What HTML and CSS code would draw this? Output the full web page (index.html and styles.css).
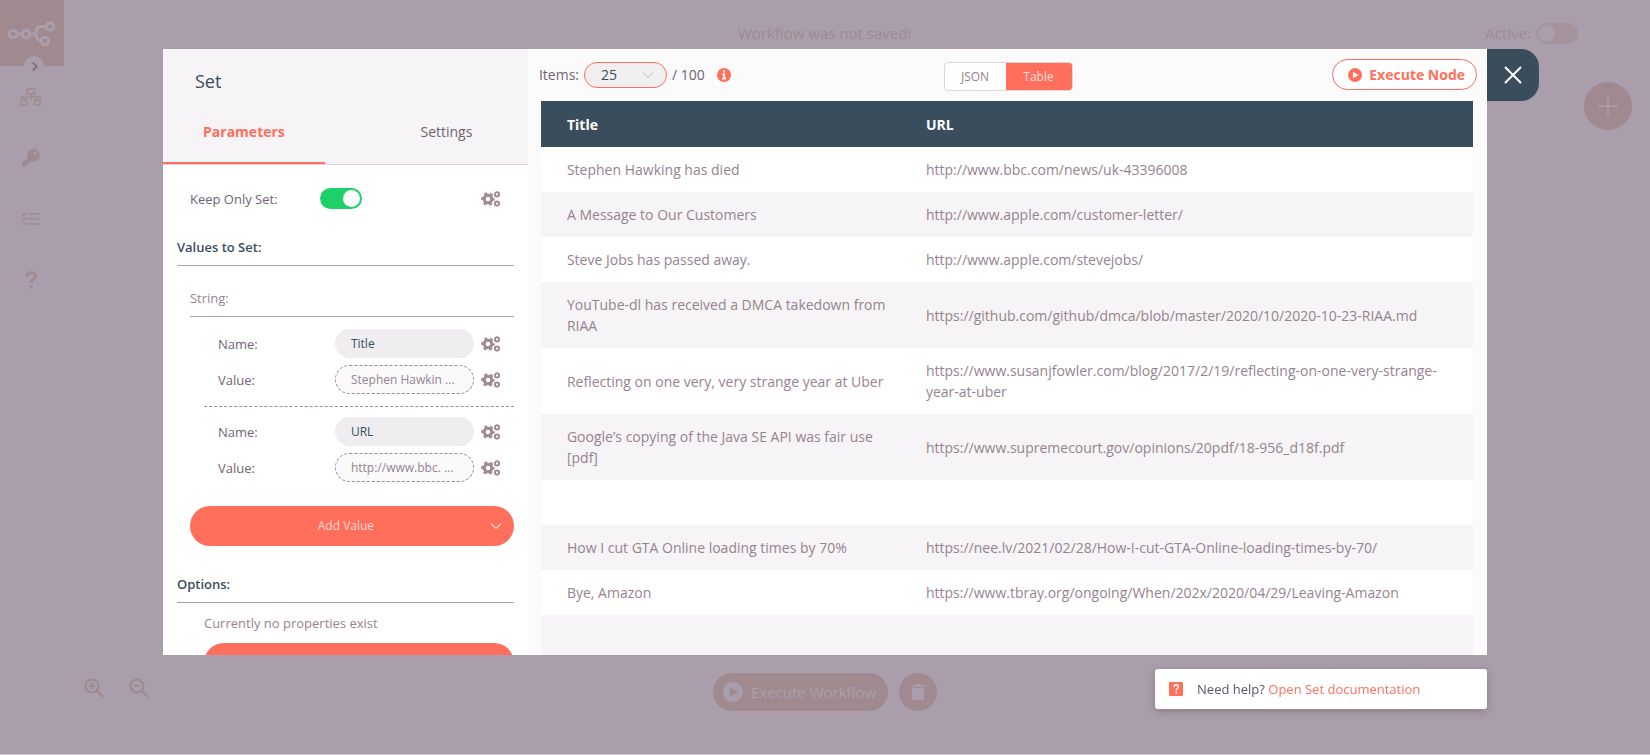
FILE: index.html
```html
<!DOCTYPE html>
<html lang="en">
<head>
<meta charset="utf-8">
<title>Set</title>
<link rel="stylesheet" href="styles.css">
</head>
<body>
<svg class="defs" aria-hidden="true">
  <symbol id="cogs" viewBox="0 0 20 16">
    <g fill="none" stroke="currentColor">
      <circle cx="7" cy="8" r="3.8" stroke-width="3"/>
      <circle cx="7" cy="8" r="5.8" stroke-width="2" stroke-dasharray="3 3.07" stroke-dashoffset="1.5"/>
      <circle cx="16" cy="3.4" r="2.1" stroke-width="1.9"/>
      <circle cx="16" cy="12.6" r="2.1" stroke-width="1.9"/>
    </g>
  </symbol>
  <symbol id="play" viewBox="0 0 20 20">
    <path fill="currentColor" fill-rule="evenodd" d="M10 0a10 10 0 1 0 0 20a10 10 0 1 0 0-20zM7 5.2L15.3 10L7 14.8z"/>
  </symbol>
</svg>

<div class="app">
  <aside class="sidebar">
    <div class="logo">
      <svg viewBox="0 0 50 26" width="50" height="26" fill="none" stroke="currentColor" stroke-width="3">
        <circle cx="6" cy="14" r="3.8"/><circle cx="19" cy="14" r="3.8"/><circle cx="43" cy="6.500" r="3.800"/><circle cx="38" cy="21" r="3.800"/>
        <path d="M10 14h5M23 14h4c4 0 1-7.500 6-7.500h6M27 14c4 0 1 7 7 7"/>
      </svg>
      <button class="expand" aria-label="Expand menu">
        <svg viewBox="0 0 10 12" width="9" height="11"><path d="M3 1.500L7.500 6L3 10.500" fill="none" stroke="currentColor" stroke-width="2"/></svg>
      </button>
    </div>
    <nav class="menu">
      <a href="#" aria-label="Workflows"><svg viewBox="0 0 22 18" width="22" height="18" fill="none" stroke="currentColor" stroke-width="1.600"><rect x="7.500" y="1" width="7" height="5"/><rect x="1" y="12" width="5.500" height="5"/><rect x="14.500" y="12" width="5.500" height="5"/><path d="M11 6v6M0 9h22M3.500 9v3M17.500 9v3"/></svg></a>
      <a href="#" aria-label="Credentials"><svg viewBox="0 0 18 18" width="18" height="18"><path fill="currentColor" fill-rule="evenodd" d="M11.500 0a6.200 6.200 0 1 1-2 12.100L8 13.500H6v2H4V18H0v-4l5.700-5.600A6.200 6.200 0 0 1 11.500 0zM13 3a1.600 1.600 0 1 0 0 3.200A1.600 1.600 0 0 0 13 3z"/></svg></a>
      <a href="#" aria-label="Executions"><svg viewBox="0 0 18 14" width="18" height="14" fill="none" stroke="currentColor" stroke-width="1.600"><path d="M6 2h12M6 7h12M6 12h12M0 2l1.500 1.500L4.500 0M0 7l1.500 1.500L4.500 5M1 12h3"/></svg></a>
      <a href="#" aria-label="Help"><svg viewBox="0 0 12 18" width="12" height="18" fill="none" stroke="currentColor" stroke-width="3"><path d="M1.500 5.500C2 0.500 10.300 0.500 10.300 5.200c0 3.300-4.300 3-4.300 6.800M6 14.200v3.400"/></svg></a>
    </nav>
  </aside>
  <header class="topbar">
    <span class="unsaved">Workflow was not saved!</span>
    <label class="active">Active: <input class="switch switch-off" type="checkbox"></label>
  </header>
  <button class="add-node" aria-label="Add node"><svg viewBox="0 0 20 20" width="20" height="20"><path d="M10 0v20M0 10h20" stroke="currentColor" stroke-width="1.500"/></svg></button>
  <div class="zoom">
    <button aria-label="Zoom in"><svg viewBox="0 0 20 20" width="20" height="20" fill="none" stroke="currentColor" stroke-width="2.200"><circle cx="8" cy="8" r="6.500"/><path d="M13 13l6 6M8 5v6M5 8h6"/></svg></button>
    <button aria-label="Zoom out"><svg viewBox="0 0 20 20" width="20" height="20" fill="none" stroke="currentColor" stroke-width="2.200"><circle cx="8" cy="8" r="6.500"/><path d="M13 13l6 6M5 8h6"/></svg></button>
  </div>
  <div class="run">
    <button class="run-workflow"><svg width="20" height="20"><use href="#play"/></svg>Execute Workflow</button>
    <button class="run-clear" aria-label="Delete execution data"><svg viewBox="0 0 14 16" width="14" height="16" fill="currentColor"><path d="M0 1.500h4L5 0h4l1 1.500h4V3H0zM1 4h12v10.500a1.500 1.500 0 0 1-1.500 1.500h-9A1.500 1.500 0 0 1 1 14.500z"/></svg></button>
  </div>
</div>

<div class="overlay">
  <div class="dialog" role="dialog" aria-labelledby="node-title">
    <div class="dialog-body">
      <section class="settings">
        <div class="settings-head">
          <h1 id="node-title">Set</h1>
          <div class="tabs" role="tablist">
            <button class="tab tab-on" role="tab" aria-selected="true">Parameters</button>
            <button class="tab" role="tab" aria-selected="false">Settings</button>
          </div>
        </div>
        <div class="params">
          <div class="row keep-row">
            <label for="keep">Keep Only Set:</label>
            <input id="keep" class="switch" type="checkbox" checked>
            <button class="cog" aria-label="Options"><svg width="20" height="16"><use href="#cogs"/></svg></button>
          </div>
          <h2>Values to Set:</h2>
          <div class="group">
            <h3>String:</h3>
            <div class="pair">
              <div class="row"><label for="n1">Name:</label><input id="n1" class="field" type="text" value="Title"><button class="cog" aria-label="Options"><svg width="20" height="16"><use href="#cogs"/></svg></button></div>
              <div class="row"><label for="v1">Value:</label><input id="v1" class="field field-expr" type="text" value="Stephen Hawkin ..."><button class="cog" aria-label="Options"><svg width="20" height="16"><use href="#cogs"/></svg></button></div>
            </div>
            <div class="pair">
              <div class="row"><label for="n2">Name:</label><input id="n2" class="field" type="text" value="URL"><button class="cog" aria-label="Options"><svg width="20" height="16"><use href="#cogs"/></svg></button></div>
              <div class="row"><label for="v2">Value:</label><input id="v2" class="field field-expr" type="text" value="http://www.bbc. ..."><button class="cog" aria-label="Options"><svg width="20" height="16"><use href="#cogs"/></svg></button></div>
            </div>
            <button class="add"><span>Add Value</span><svg viewBox="0 0 12 8" width="12" height="8"><path d="M1 1.500l5 5l5-5" fill="none" stroke="currentColor" stroke-width="1.200"/></svg></button>
          </div>
          <h2>Options:</h2>
          <p class="empty">Currently no properties exist</p>
          <button class="add add-option" aria-label="Add option"></button>
        </div>
      </section>

      <section class="output">
        <div class="output-bar">
          <div class="items">
            <label for="count">Items:</label>
            <span class="select-box">
              <select id="count"><option>25</option></select>
              <svg viewBox="0 0 12 8" width="12" height="8"><path d="M1 1.500l5 5l5-5" fill="none" stroke="currentColor"/></svg>
            </span>
            <span>/ 100</span>
            <svg class="info" viewBox="0 0 14 14" width="14" height="14"><circle cx="7" cy="7" r="7" fill="currentColor"/><path d="M7 2.300v2.200M5.300 6.300H7.300V10.500M5.200 10.500h3.700" fill="none" stroke="#fff" stroke-width="1.800"/></svg>
          </div>
          <div class="views"><button>JSON</button><button class="view-on">Table</button></div>
          <button class="run-node"><svg width="14" height="14"><use href="#play"/></svg>Execute Node</button>
        </div>
        <table>
          <thead><tr><th class="col-title">Title</th><th>URL</th></tr></thead>
          <tbody>
            <tr><td>Stephen Hawking has died</td><td>http://www.bbc.com/news/uk-43396008</td></tr>
            <tr><td>A Message to Our Customers</td><td>http://www.apple.com/customer-letter/</td></tr>
            <tr><td>Steve Jobs has passed away.</td><td>http://www.apple.com/stevejobs/</td></tr>
            <tr><td>YouTube-dl has received a DMCA takedown from RIAA</td><td>https://github.com/github/dmca/blob/master/2020/10/2020-10-23-RIAA.md</td></tr>
            <tr><td>Reflecting on one very, very strange year at Uber</td><td>https://www.susanjfowler.com/blog/2017/2/19/reflecting-on-one-very-strange-year-at-uber</td></tr>
            <tr><td>Google’s copying of the Java SE API was fair use [pdf]</td><td>https://www.supremecourt.gov/opinions/20pdf/18-956_d18f.pdf</td></tr>
            <tr><td></td><td></td></tr>
            <tr><td>How I cut GTA Online loading times by 70%</td><td>https://nee.lv/2021/02/28/How-I-cut-GTA-Online-loading-times-by-70/</td></tr>
            <tr><td>Bye, Amazon</td><td>https://www.tbray.org/ongoing/When/202x/2020/04/29/Leaving-Amazon</td></tr>
            <tr><td></td><td></td></tr>
          </tbody>
        </table>
      </section>
    </div>
    <button class="close" aria-label="Close"><svg viewBox="0 0 18 18" width="18" height="18"><path d="M1 1l16 16M17 1L1 17" stroke="currentColor" stroke-width="2"/></svg></button>
    <div class="help">
      <svg viewBox="0 0 14 14" width="14" height="14"><rect width="14" height="14" rx="1" fill="currentColor"/><path d="M5 5c0-3 4.500-3 4.500-.4C9.500 6.200 7.300 6.200 7.300 8.400M7.300 9.800v1.800" fill="none" stroke="#fff" stroke-width="1.500"/></svg>
      <span>Need help? <a href="#">Open Set documentation</a></span>
    </div>
  </div>
</div>
</body>
</html>
```

FILE: styles.css
```css
:root {
  --veil: #aa9eac;
  --shade: #a08a90;
  --accent: #ff6f5c;
  --navy: #394d5c;
  --muted: #95838f;
  --text: #6f6473;
  --pale: #f6f4f6;
}

* { box-sizing: border-box; }

body {
  margin: 0;
  min-height: 100vh;
  background: var(--veil);
  color: var(--text);
  font: 13px/20px "Open Sans", "Noto Sans", sans-serif;
}

button, input, select { font: inherit; color: inherit; }
button { padding: 0; border: 0; background: none; }
svg { display: block; flex: none; }
a { color: inherit; text-decoration: none; }
.defs { position: absolute; width: 0; height: 0; }

/* Workflow editor behind the dialog */
.app {
  position: relative;
  display: grid;
  grid-template-columns: 64px 1fr;
  height: 100vh;
  border-bottom: 1px solid #d0c5cc;
  color: var(--shade);
}

.logo {
  position: relative;
  display: flex;
  align-items: center;
  justify-content: center;
  height: 66px;
  background: var(--shade);
  color: var(--veil);
}

.expand {
  position: absolute;
  left: 24px;
  bottom: -10px;
  display: grid;
  place-items: center;
  width: 20px;
  height: 20px;
  border-radius: 50%;
  background: var(--veil);
  color: #806e78;
}

.menu { display: grid; grid-auto-rows: 61px; padding-right: 2px; }
.menu a { display: grid; place-items: center; }

.topbar {
  display: flex;
  align-items: center;
  height: 66px;
  padding-right: 72px;
  font-size: 14px;
}
.unsaved { flex: 1; padding-left: 100px; text-align: center; font-size: 15px; }
.active { display: flex; align-items: center; gap: 5px; font-size: 15px; }

.switch {
  appearance: none;
  display: flex;
  align-items: center;
  justify-content: flex-end;
  width: 42px;
  height: 21px;
  margin: 0;
  padding: 0 2px;
  border-radius: 11px;
  background: #1dd068;
}
.switch::before { content: ""; width: 17px; height: 17px; border-radius: 50%; background: #fff; }
.switch-off { justify-content: flex-start; background: #a4929c; }
.switch-off::before { background: var(--veil); }

.add-node {
  position: absolute;
  top: 82px;
  right: 18px;
  display: grid;
  place-items: center;
  width: 48px;
  height: 48px;
  border-radius: 50%;
  background: var(--shade);
  color: var(--veil);
}

.zoom { position: absolute; left: 84px; bottom: 56px; display: flex; gap: 25px; }

.run {
  position: absolute;
  inset: auto 0 43px;
  display: flex;
  justify-content: center;
  gap: 11px;
  color: var(--veil);
}
.run-workflow {
  display: flex;
  align-items: center;
  gap: 8px;
  height: 38px;
  padding: 0 12px 0 10px;
  border-radius: 19px;
  background: var(--shade);
  font-size: 15px;
  font-weight: 500;
}
.run-clear { display: grid; place-items: center; width: 38px; height: 38px; border-radius: 50%; background: var(--shade); }

/* Dialog */
.overlay {
  position: fixed;
  inset: 0;
  display: flex;
  justify-content: center;
  padding: 49px 0 100px;
}
.dialog { position: relative; display: flex; width: 80.25%; }
.dialog-body {
  flex: 1;
  display: grid;
  grid-template-columns: 365px 1fr;
  overflow: hidden;
  background: #fcfbfc;
}

.close {
  position: absolute;
  top: 0;
  left: 100%;
  display: grid;
  place-items: center;
  width: 52px;
  height: 52px;
  border-radius: 0 18px 18px 0;
  background: var(--navy);
  color: #fff;
}

.help {
  position: absolute;
  top: calc(100% + 14px);
  right: 0;
  display: flex;
  align-items: center;
  gap: 14px;
  width: 332px;
  height: 40px;
  padding: 0 14px;
  border-radius: 3px;
  background: #fff;
  box-shadow: 0 2px 8px #8d7a84;
  color: var(--accent);
}
.help span { color: #5d5565; }
.help a { color: var(--accent); font-weight: 500; }

/* Node settings */
.settings { min-height: 0; overflow: hidden; background: #fff; }
.settings-head { border-bottom: 1px solid #ddd5da; background: var(--pale); }
.settings h1 {
  margin: 0;
  padding: 20px 32px 10px;
  color: var(--navy);
  font-size: 18px;
  font-weight: 500;
  line-height: 24px;
}
.tabs { display: grid; grid-template-columns: 162px 1fr; }
.tab { height: 61px; padding-bottom: 3px; font-size: 14px; }
.tab:last-child { padding-left: 40px; }
.tab-on { padding-bottom: 1px; border-bottom: 2px solid var(--accent); color: var(--accent); font-weight: 700; }

.params { padding: 19px 14px 0; }
.row { display: grid; grid-template-columns: 1fr 139px 20px; align-items: center; column-gap: 7px; height: 29px; padding-right: 13px; }
.keep-row { grid-template-columns: 123px 1fr 20px; padding-left: 13px; }
.cog { color: var(--shade); }

.params h2 {
  margin: 24px 0 0;
  padding-bottom: 8px;
  border-bottom: 1px solid var(--veil);
  color: var(--navy);
  font-size: 13px;
  font-weight: 600;
  line-height: 20px;
}
.group { padding-left: 13px; }
.group h3 {
  margin: 22px 0 0;
  padding-bottom: 8px;
  border-bottom: 1px solid var(--veil);
  color: var(--muted);
  font-size: 13px;
  font-weight: 400;
}
.pair { display: grid; gap: 7px; margin-left: 14px; padding: 12px 0 12px 14px; }
.pair + .pair { padding-top: 10px; border-top: 1px dashed var(--shade); }
.field {
  width: 100%;
  height: 29px;
  padding: 0 15px;
  border: 1px solid transparent;
  border-radius: 15px;
  background: #f0edf0;
  color: var(--navy);
  font-size: 12px;
}
.field-expr { border: 1px dashed var(--shade); background: #fbfafb; color: var(--muted); }

.add {
  display: grid;
  grid-template-columns: 1fr 12px;
  align-items: center;
  width: 100%;
  height: 40px;
  margin-top: 12px;
  padding: 0 12px;
  border-radius: 20px;
  background: var(--accent);
  color: #ffd5d0;
  font-size: 12px;
}
.add-option { width: auto; min-width: calc(100% - 27px); margin: 10px 0 0 27px; }
.params .group + h2 { margin-top: 28px; }
.empty { margin: 10px 0 0; padding-left: 27px; color: var(--muted); }

/* Node output */
.output { padding: 10px 14px 0 11px; min-height: 0; overflow: hidden; }
.output-bar { display: grid; grid-template-columns: 1fr auto 1fr; align-items: start; height: 42px; margin-right: -4px; }
.items { display: flex; align-items: center; gap: 5px; height: 32px; font-size: 14px; }
.info { margin-left: 7px; color: var(--accent); }
.select-box { position: relative; color: #c9bcc5; }
.select-box select {
  appearance: none;
  display: block;
  width: 83px;
  height: 26px;
  padding: 0 16px;
  border: 1px solid var(--accent);
  border-radius: 13px;
  background: #f2eff1;
  color: var(--navy);
}
.select-box svg { position: absolute; right: 13px; top: 9px; }

.views { display: flex; margin-top: 3px; height: 29px; border: 1px solid #ddd5da; border-radius: 4px; background: #fff; overflow: hidden; font-size: 12px; }
.views button { width: 61px; color: var(--muted); }
.views .view-on { width: 66px; background: var(--accent); color: #ffe0dc; }

.run-node {
  justify-self: end;
  display: flex;
  align-items: center;
  gap: 7px;
  height: 31px;
  padding: 0 11px 0 15px;
  border: 1px solid var(--accent);
  border-radius: 16px;
  background: #fff;
  color: var(--accent);
  font-size: 14px;
  font-weight: 700;
}

.output table { width: calc(100% - 2px); margin-left: 2px; border-collapse: collapse; table-layout: fixed; font-size: 14px; line-height: 21px; }
th { height: 46px; padding: 0 26px; background: var(--navy); color: #fff; text-align: left; font-weight: 700; }
.col-title { width: 359px; }
td { height: 45px; padding: 12px 26px; color: var(--muted); }
td:first-child { padding-right: 12px; }
tbody tr { background: #fff; }
tbody tr:nth-child(even) { background: var(--pale); }
```
